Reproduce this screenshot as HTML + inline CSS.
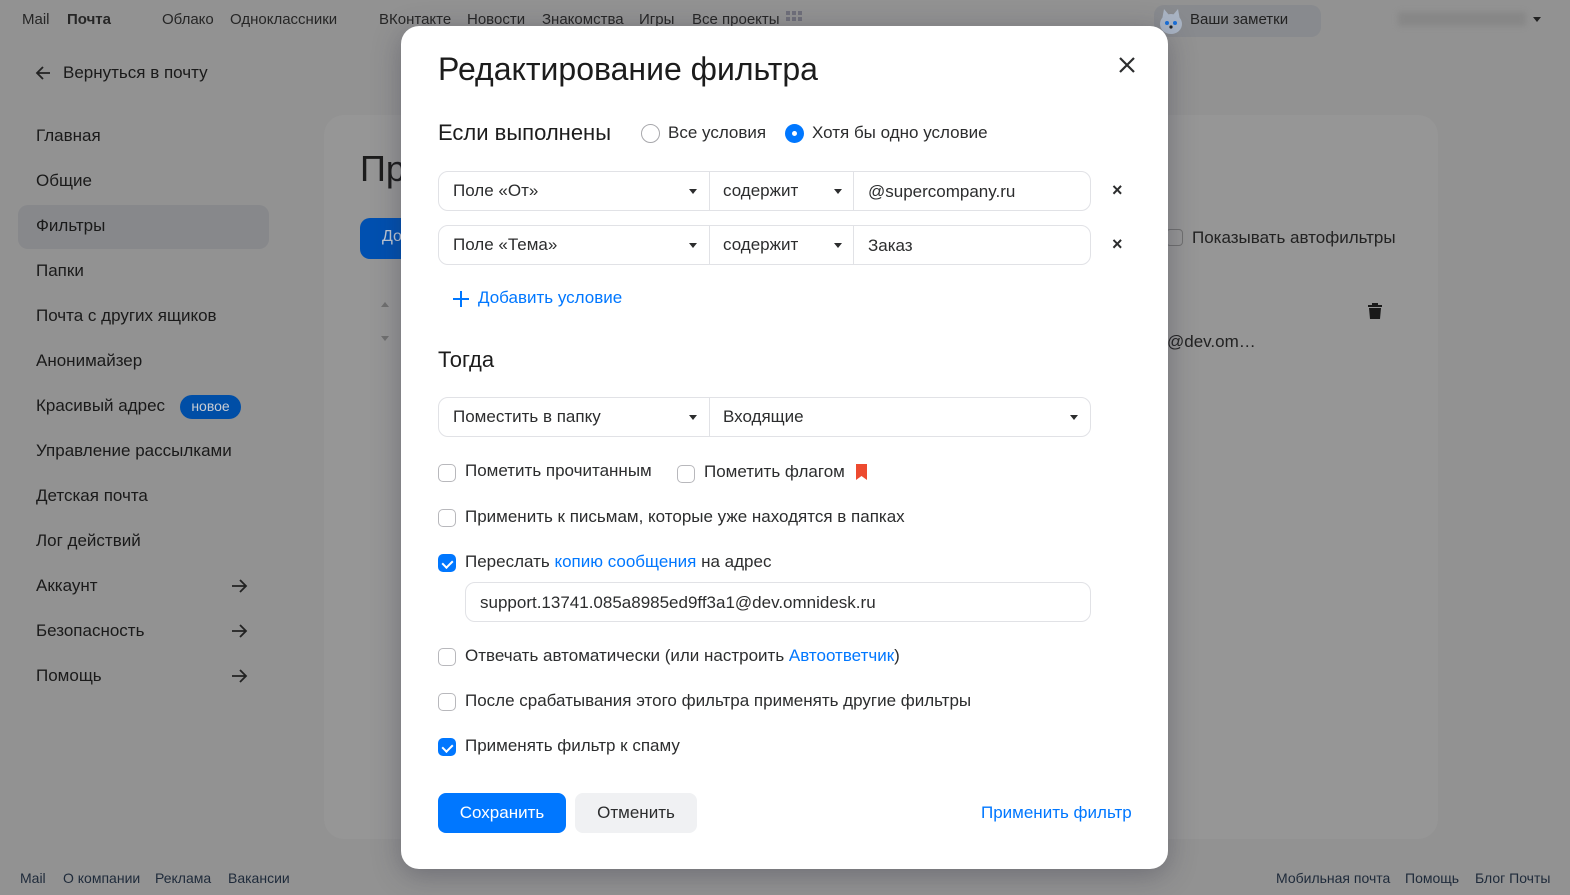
<!DOCTYPE html>
<html><head><meta charset="utf-8">
<style>
*{box-sizing:border-box;margin:0;padding:0}
body{width:1570px;height:895px;overflow:hidden;background:#929292;font-family:"Liberation Sans",Arial,sans-serif;color:#2c2d2e;position:relative}
.a{position:absolute;white-space:nowrap}
.nav{font-size:15px;color:#262626;top:11px}
.side{font-size:17px;color:#1a1a1a;left:36px}
.m{font-size:17px;color:#2c2d2e}
.cb{position:absolute;width:18px;height:18px;border:1px solid #b8b8bc;border-radius:5px;background:#fff}
.cb.on{background:#0077ff;border-color:#0077ff}
.cb.on:after{content:"";position:absolute;left:5px;top:3px;width:5px;height:8px;border:solid #fff;border-width:0 2px 2px 0;transform:rotate(45deg)}
.box{position:absolute;border:1px solid #e1e2e6;border-radius:10px;background:#fff;height:40px}
.sep{position:absolute;top:0;bottom:0;width:1px;background:#e1e2e6}
.tri{position:absolute;width:0;height:0;border-left:4px solid transparent;border-right:4px solid transparent;border-top:5px solid #2c2d2e}
.x{position:absolute;font-size:18px;font-weight:bold;color:#2c2d2e}
.blue{color:#0077ff}
</style></head><body>
<div class="a nav" style="left:22px">Mail</div>
<div class="a nav" style="left:67px;font-weight:bold">Почта</div>
<div class="a nav" style="left:162px">Облако</div>
<div class="a nav" style="left:230px">Одноклассники</div>
<div class="a nav" style="left:379px">ВКонтакте</div>
<div class="a nav" style="left:467px">Новости</div>
<div class="a nav" style="left:542px">Знакомства</div>
<div class="a nav" style="left:639px">Игры</div>
<div class="a nav" style="left:692px">Все проекты</div>
<svg class="a" style="left:786px;top:11px" width="16" height="16"><g fill="#6f6f7a"><rect x="0" y="0" width="4" height="4"/><rect x="6" y="0" width="4" height="4"/><rect x="12" y="0" width="4" height="4"/><rect x="0" y="6" width="4" height="4"/><rect x="6" y="6" width="4" height="4"/><rect x="12" y="6" width="4" height="4"/></g></svg>
<div class="a" style="left:1154px;top:5px;width:167px;height:32px;border-radius:10px;background:#888a8e"></div>
<svg class="a" style="left:1157px;top:6px" width="28" height="30"><ellipse cx="14" cy="18" rx="11" ry="10" fill="#a9b4c4"/><path d="M5 14 L7 3 L12 9 Z M23 14 L21 3 L16 9Z" fill="#a9b4c4"/><circle cx="10" cy="17" r="2" fill="#1a6fd8"/><circle cx="18" cy="17" r="2" fill="#1a6fd8"/><circle cx="14" cy="21" r="1.6" fill="#222"/></svg>
<div class="a" style="left:1190px;top:11px;font-size:15px;color:#222">Ваши заметки</div>
<div class="a" style="left:1398px;top:12px;width:128px;height:14px;background:#878787;filter:blur(3px)"></div>
<div class="a tri" style="left:1533px;top:17px;border-top-color:#222"></div>
<svg class="a" style="left:34px;top:65px" width="18" height="16"><path d="M16 8H3M9 2L3 8l6 6" stroke="#222" stroke-width="1.8" fill="none"/></svg>
<div class="a" style="left:63px;top:63px;font-size:17px;color:#1a1a1a">Вернуться в почту</div>
<div class="a" style="left:18px;top:205px;width:251px;height:44px;border-radius:10px;background:#87888b"></div>
<div class="a side" style="top:126px">Главная</div>
<div class="a side" style="top:171px">Общие</div>
<div class="a side" style="top:216px">Фильтры</div>
<div class="a side" style="top:261px">Папки</div>
<div class="a side" style="top:306px">Почта с других ящиков</div>
<div class="a side" style="top:351px">Анонимайзер</div>
<div class="a side" style="top:396px">Красивый адрес</div>
<div class="a" style="left:180px;top:395px;width:61px;height:24px;border-radius:12px;background:#004ea6;color:#c8ccd2;font-size:14px;text-align:center;line-height:22px">новое</div>
<div class="a side" style="top:441px">Управление рассылками</div>
<div class="a side" style="top:486px">Детская почта</div>
<div class="a side" style="top:531px">Лог действий</div>
<div class="a side" style="top:576px">Аккаунт</div>
<div class="a side" style="top:621px">Безопасность</div>
<div class="a side" style="top:666px">Помощь</div>
<svg class="a" style="left:230px;top:578px" width="18" height="110"><g stroke="#222" stroke-width="1.8" fill="none"><path d="M2 8h14M10 2l6 6-6 6"/><path d="M2 53h14M10 47l6 6-6 6"/><path d="M2 98h14M10 92l6 6-6 6"/></g></svg>
<div class="a" style="left:324px;top:115px;width:1114px;height:724px;border-radius:20px;background:#969696"></div>
<div class="a" style="left:360px;top:148px;font-size:36px;color:#1c1c1c">Пр</div>
<div class="a" style="left:360px;top:218px;width:60px;height:41px;border-radius:10px;background:#0050b0;color:#c0c8d4;font-size:16px;padding:10px 0 0 22px">До</div>
<div class="a" style="left:381px;top:302px;border-left:4px solid transparent;border-right:4px solid transparent;border-bottom:5px solid #707070"></div>
<div class="a" style="left:381px;top:336px;border-left:4px solid transparent;border-right:4px solid transparent;border-top:5px solid #707070"></div>
<div class="a" style="left:1166px;top:229px;width:17px;height:17px;border:1px solid #707070;border-radius:4px"></div>
<div class="a" style="left:1192px;top:228px;font-size:17px;color:#222">Показывать автофильтры</div>
<svg class="a" style="left:1367px;top:302px" width="16" height="18"><path d="M5 1h6v2h4v2H1V3h4zM2 6h12l-1 11H3z" fill="#1a1a1a"/></svg>
<div class="a" style="left:1167px;top:332px;font-size:17px;color:#222">@dev.om…</div>
<div class="a" style="left:20px;top:870px;font-size:14px;color:#1e2a3a">Mail</div>
<div class="a" style="left:63px;top:870px;font-size:14px;color:#1e2a3a">О компании</div>
<div class="a" style="left:155px;top:870px;font-size:14px;color:#1e2a3a">Реклама</div>
<div class="a" style="left:228px;top:870px;font-size:14px;color:#1e2a3a">Вакансии</div>
<div class="a" style="left:1276px;top:870px;font-size:14px;color:#1e2a3a">Мобильная почта</div>
<div class="a" style="left:1405px;top:870px;font-size:14px;color:#1e2a3a">Помощь</div>
<div class="a" style="left:1475px;top:870px;font-size:14px;color:#1e2a3a">Блог Почты</div>
<div class="a" style="left:401px;top:26px;width:767px;height:843px;background:#fff;border-radius:18px;box-shadow:0 6px 28px rgba(40,40,60,.35)">
 <div class="a" style="left:37px;top:25px;font-size:32px;color:#1c1c1c">Редактирование фильтра</div>
 <svg class="a" style="left:718px;top:31px" width="16" height="16"><path d="M1 1L15 15M15 1L1 15" stroke="#2c2d2e" stroke-width="2.2"/></svg>
 <div class="a" style="left:37px;top:94px;font-size:22px;color:#1c1c1c">Если выполнены</div>
 <div class="a" style="left:240px;top:98px;width:19px;height:19px;border:1px solid #a8a8ac;border-radius:50%"></div>
 <div class="a m" style="left:267px;top:97px">Все условия</div>
 <div class="a" style="left:384px;top:98px;width:19px;height:19px;border-radius:50%;background:#0077ff"><div style="margin:7px;width:5px;height:5px;border-radius:50%;background:#fff"></div></div>
 <div class="a m" style="left:411px;top:97px">Хотя бы одно условие</div>
 <div class="box" style="left:37px;top:145px;width:653px"><div class="sep" style="left:270px"></div><div class="sep" style="left:414px"></div>
  <div class="a m" style="left:14px;top:9px">Поле «От»</div><div class="tri" style="left:250px;top:17px"></div>
  <div class="a m" style="left:284px;top:9px">содержит</div><div class="tri" style="left:395px;top:17px"></div>
  <div class="a m" style="left:429px;top:10px">@supercompany.ru</div></div>
 <div class="x" style="left:711px;top:154px">×</div>
 <div class="box" style="left:37px;top:199px;width:653px"><div class="sep" style="left:270px"></div><div class="sep" style="left:414px"></div>
  <div class="a m" style="left:14px;top:9px">Поле «Тема»</div><div class="tri" style="left:250px;top:17px"></div>
  <div class="a m" style="left:284px;top:9px">содержит</div><div class="tri" style="left:395px;top:17px"></div>
  <div class="a m" style="left:429px;top:10px">Заказ</div></div>
 <div class="x" style="left:711px;top:208px">×</div>
 <svg class="a" style="left:51px;top:264px" width="18" height="18"><path d="M9 1v16M1 9h16" stroke="#0077ff" stroke-width="2"/></svg>
 <div class="a m blue" style="left:77px;top:262px">Добавить условие</div>
 <div class="a" style="left:37px;top:321px;font-size:22px;color:#1c1c1c">Тогда</div>
 <div class="box" style="left:37px;top:371px;width:653px"><div class="sep" style="left:270px"></div>
  <div class="a m" style="left:14px;top:9px">Поместить в папку</div><div class="tri" style="left:250px;top:17px"></div>
  <div class="a m" style="left:284px;top:9px">Входящие</div><div class="tri" style="left:631px;top:17px"></div></div>
 <div class="cb" style="left:37px;top:438px"></div><div class="a m" style="left:64px;top:435px">Пометить прочитанным</div>
 <div class="cb" style="left:276px;top:439px"></div><div class="a m" style="left:303px;top:436px">Пометить флагом</div>
 <svg class="a" style="left:455px;top:438px" width="11" height="16"><path d="M0 0h11v16l-5.5-4L0 16z" fill="#ed4a2f"/></svg>
 <div class="cb" style="left:37px;top:483px"></div><div class="a m" style="left:64px;top:481px">Применить к письмам, которые уже находятся в папках</div>
 <div class="cb on" style="left:37px;top:528px"></div><div class="a m" style="left:64px;top:526px">Переслать <span class="blue">копию сообщения</span> на адрес</div>
 <div class="box" style="left:64px;top:556px;width:626px"><div class="a m" style="left:14px;top:10px">support.13741.085a8985ed9ff3a1@dev.omnidesk.ru</div></div>
 <div class="cb" style="left:37px;top:622px"></div><div class="a m" style="left:64px;top:620px">Отвечать автоматически (или настроить <span class="blue">Автоответчик</span>)</div>
 <div class="cb" style="left:37px;top:667px"></div><div class="a m" style="left:64px;top:665px">После срабатывания этого фильтра применять другие фильтры</div>
 <div class="cb on" style="left:37px;top:712px"></div><div class="a m" style="left:64px;top:710px">Применять фильтр к спаму</div>
 <div class="a" style="left:37px;top:767px;width:128px;height:40px;border-radius:8px;background:#0077ff;color:#fff;font-size:17px;text-align:center;line-height:40px">Сохранить</div>
 <div class="a" style="left:174px;top:767px;width:122px;height:40px;border-radius:8px;background:#f0f1f3;color:#2c2d2e;font-size:17px;text-align:center;line-height:40px">Отменить</div>
 <div class="a m blue" style="left:580px;top:777px">Применить фильтр</div>
</div>
</body></html>
